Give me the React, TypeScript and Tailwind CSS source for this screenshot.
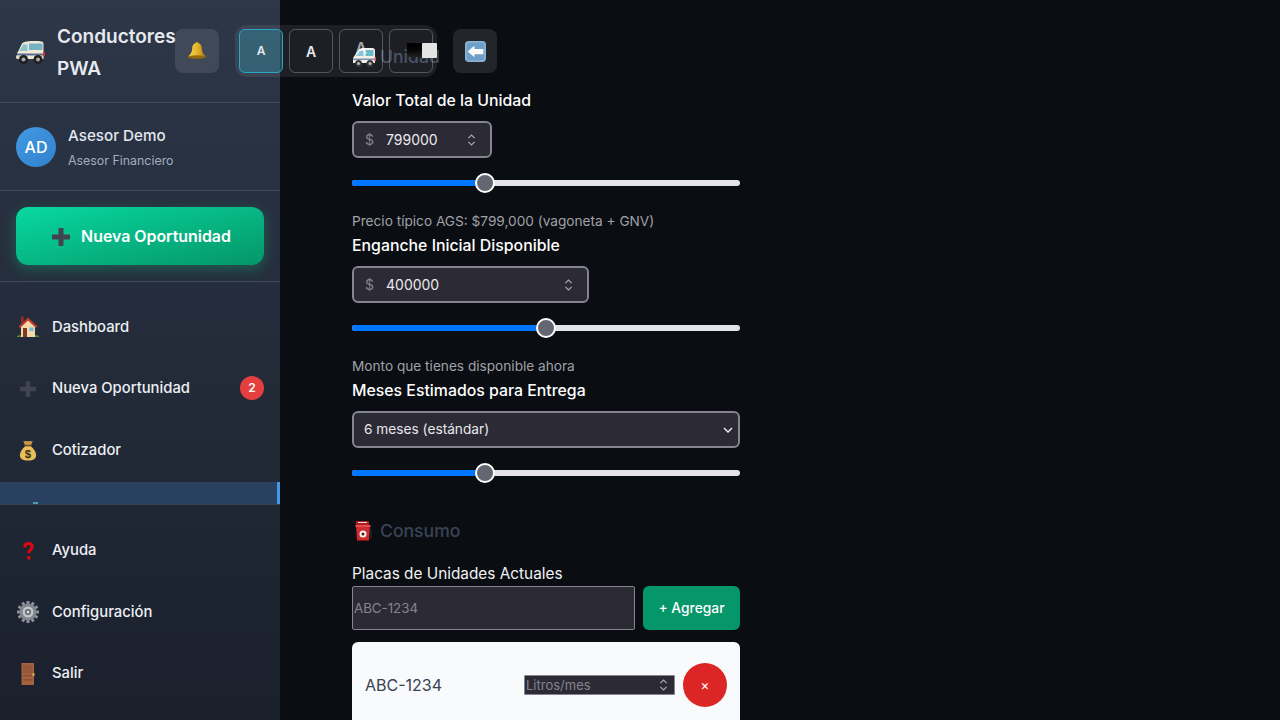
import React from "react";

const font = { fontFamily: "Inter, 'Liberation Sans', sans-serif" };

function VanIcon({ className }: { className?: string }) {
  return (
    <svg viewBox="0 0 29 25" className={className}>
      <path d="M6 3.500C8 1.500 12 1 20 1c3 0 5.500.2 6.500.8.800.5 1 1.200 1 2.200v15H1v-5c0-1 .4-1.800 1.200-2.800z" fill="#efe8d2" />
      <path d="M7 4.500h4.500V11H3.200z" fill="#8cc3cf" />
      <path d="M13 3.500h13.500V10H13z" fill="#74b3c6" />
      <path d="M1 13.500h27v2H1z" fill="#5a6d9a" />
      <rect x="0" y="15.500" width="3" height="3" fill="#d9d4c4" />
      <rect x="27" y="12" width="2" height="4" fill="#c9393a" />
      <circle cx="7.500" cy="19.500" r="4.500" fill="#1f1f1f" />
      <circle cx="7.500" cy="19.500" r="2" fill="#a9a9a9" />
      <circle cx="22" cy="19.500" r="4.500" fill="#1f1f1f" />
      <circle cx="22" cy="19.500" r="2" fill="#a9a9a9" />
    </svg>
  );
}

function AmbulanceIcon({ className }: { className?: string }) {
  return (
    <svg viewBox="0 0 24 22" className={className}>
      <path d="M7 3.500c1-1 2.500-1.500 4-1.500h9.500c1.500 0 2.500 1 2.500 2.500V17H1v-4c0-1 .3-1.700 1-2.500z" fill="#f1efe6" />
      <path d="M8 4.500h3.500V10H3.800z" fill="#7cc4d4" />
      <path d="M13.500 4h8v6h-8z" fill="#5fb6c9" />
      <path d="M1 12.500h22V14H1z" fill="#6d86ad" />
      <rect x="22.500" y="11" width="1.500" height="4" fill="#d8443c" />
      <circle cx="6.500" cy="17.500" r="3.500" fill="#262626" />
      <circle cx="6.500" cy="17.500" r="1.500" fill="#b8b8b8" />
      <circle cx="18" cy="17.500" r="3.500" fill="#262626" />
      <circle cx="18" cy="17.500" r="1.500" fill="#b8b8b8" />
    </svg>
  );
}

function BellIcon() {
  return (
    <svg viewBox="0 0 20 20" className="h-[20px] w-[20px]">
      <defs>
        <linearGradient id="bell" x1="0" y1="0" x2="1" y2="0">
          <stop offset="0" stopColor="#f9da4e" />
          <stop offset="0.6" stopColor="#e0ac25" />
          <stop offset="1" stopColor="#a6770e" />
        </linearGradient>
      </defs>
      <circle cx="10" cy="2.200" r="1.500" fill="#c6951f" />
      <path d="M10 2c3.500 0 4.800 2.500 4.800 5.500 0 3 1 5.200 4 8H1.200c3-2.800 4-5 4-8C5.200 4.500 6.500 2 10 2z" fill="url(#bell)" />
      <ellipse cx="10" cy="16" rx="9" ry="1.700" fill="#94690e" />
    </svg>
  );
}

function BackIcon() {
  return (
    <svg viewBox="0 0 20 20" className="h-[21px] w-[21px]">
      <rect x="0" y="0" width="20" height="20" rx="3.500" fill="#8cb4d4" />
      <rect x="1.500" y="1.500" width="17" height="17" rx="2.500" fill="#6e9fc8" />
      <path d="M2.500 10 9 4.500V7.500h8.500v5H9v3z" fill="#fafafa" />
    </svg>
  );
}

function PlusIcon({ className }: { className?: string }) {
  return (
    <svg viewBox="0 0 18 18" className={className}>
      <path d="M7.500 0h3c.600 0 1 .400 1 1v5.500H17c.600 0 1 .400 1 1v3c0 .600-.400 1-1 1h-5.500V17c0 .600-.400 1-1 1h-3c-.600 0-1-.400-1-1v-5.500H1c-.600 0-1-.400-1-1v-3c0-.600.400-1 1-1h5.500V1c0-.600.400-1 1-1z" fill="#3f4450" />
    </svg>
  );
}

function HouseIcon() {
  return (
    <svg viewBox="0 0 22 22" className="h-[22px] w-[22px]">
      <path d="M0 20.500c1-1.500 3-1.500 4-1h14c1-.500 3-.500 4 1V21H0z" fill="#5b8c3a" />
      <path d="M4 10 11 3.500 18 10v11H4z" fill="#f3d9a8" />
      <rect x="4" y="0.500" width="2.500" height="6" fill="#9c2f25" />
      <path d="M11 1.500 1.500 10.500 3 12l8-7.500 8 7.500 1.500-1.500z" fill="#c0392b" />
      <rect x="6" y="12" width="4" height="9" fill="#7a3b22" />
      <rect x="12.500" y="11.500" width="4" height="3.500" fill="#6db7e4" />
    </svg>
  );
}

function MoneyBagIcon() {
  return (
    <svg viewBox="0 0 18 22" className="h-[21px] w-[18px]">
      <path d="M4 1c2 1 3-.5 5 .5 2-1 3 .5 5-.5l-2 5H6z" fill="#c69a4a" />
      <rect x="5.500" y="5" width="7" height="1.500" fill="#6d4c1f" />
      <path d="M6 6.500h6c3 2.500 5.500 6 5.500 9.500 0 3.500-3 5.500-8.500 5.500S.5 19.500.5 16C.5 12.500 3 9 6 6.500z" fill="#e9bf5a" />
      <text x="9" y="18.500" textAnchor="middle" fontSize="12" fontWeight="700" fill="#3a2e16" fontFamily="'Liberation Sans', sans-serif">$</text>
    </svg>
  );
}

function QuestionIcon() {
  return (
    <svg viewBox="0 0 11 18" className="h-[18px] w-[11px]" fill="none">
      <path d="M1.800 5.500C1.800 2.800 3.500 1.600 5.500 1.600c2.200 0 3.700 1.300 3.700 3.200 0 2.700-3.400 3.200-3.400 6.400" stroke="#e0060f" strokeWidth="3" />
      <circle cx="5.800" cy="15.800" r="1.900" fill="#e0060f" />
    </svg>
  );
}

function GearIcon() {
  const teeth = Array.from({ length: 12 }, (_, i) => i * 30);
  return (
    <svg viewBox="0 0 22 22" className="h-[22px] w-[22px]">
      {teeth.map((a) => (
        <rect key={a} x="9.500" y="0" width="3" height="5" fill="#8d939b" transform={`rotate(${a} 11 11)`} />
      ))}
      <circle cx="11" cy="11" r="8.500" fill="#7f858d" />
      <circle cx="11" cy="11" r="5.500" fill="#c2c6cb" />
      <circle cx="11" cy="11" r="3" fill="#5c6168" />
      <circle cx="11" cy="11" r="1.500" fill="#d9dce0" />
    </svg>
  );
}

function DoorIcon() {
  return (
    <svg viewBox="0 0 14 22" className="h-[22px] w-[14px]">
      <rect x="0.500" y="0" width="12.500" height="22" fill="#a5623f" />
      <rect x="2" y="1.500" width="9.500" height="9" fill="#96583a" />
      <rect x="2" y="12" width="9.500" height="1.500" fill="#8a4f31" />
      <rect x="2" y="16" width="9.500" height="1.500" fill="#8a4f31" />
      <rect x="11.500" y="10" width="2" height="3" fill="#d5b041" />
    </svg>
  );
}

function FuelIcon() {
  return (
    <svg viewBox="0 0 18 20" className="h-[20px] w-[18px]">
      <path d="M1 0h13v4H1z" fill="#a91f24" />
      <path d="M3 1h9v1H3z" fill="#e8d5d5" />
      <path d="M1 4h14l-1 15H2z" fill="#cf2a2e" />
      <path d="M0.500 4h15v2h-15z" fill="#e84a4c" />
      <circle cx="8" cy="13" r="3.500" fill="#f4f4f4" />
      <circle cx="8" cy="13" r="1.500" fill="#5a1212" />
      <path d="M15 8h2v10h-2z" fill="#1c1c20" />
      <path d="M2 19h12v1H2z" fill="#7a1518" />
    </svg>
  );
}

function Stepper({ className }: { className?: string }) {
  return (
    <svg viewBox="0 0 10 14" className={className} fill="none" stroke="currentColor" strokeWidth="1.300">
      <path d="M1.500 5 5 1.500 8.500 5" />
      <path d="M1.500 9 5 12.500 8.500 9" />
    </svg>
  );
}

function Slider({ pct }: { pct: number }) {
  return (
    <div className="relative mt-[15px] h-[20px] w-[388px]">
      <div className="absolute left-0 right-0 top-[7px] h-[6px] rounded-full bg-[#e4e3ea]" />
      <div className="absolute left-0 top-[7px] h-[6px] rounded-l-full bg-[#0075ff]" style={{ width: `${pct}%` }} />
      <div
        className="absolute top-0 h-[20px] w-[20px] -translate-x-1/2 rounded-full border-2 border-white bg-[#666673]"
        style={{ left: `${pct}%` }}
      />
    </div>
  );
}

function MoneyInput({ value, width }: { value: string; width: string }) {
  return (
    <div className={`mt-[10px] flex h-[37px] items-center rounded-md border-2 border-[#85848f] bg-[#2c2b35] pl-[11px] pr-[14px] text-[14px] ${width}`}>
      <span className="w-[21px] text-[#85848f]">$</span>
      <span className="flex-1 text-[#e8e8ec]">{value}</span>
      <Stepper className="h-[14px] w-[9px] text-[#a9a9b2]" />
    </div>
  );
}

function Label({ children }: { children: React.ReactNode }) {
  return <div className="h-[22px] text-[15.850px] font-medium leading-[24px] text-white">{children}</div>;
}

function Help({ children }: { children: React.ReactNode }) {
  return <div className="mt-[19px] h-[18px] text-[13.650px] leading-[18px] text-[#a1a1a8]">{children}</div>;
}

function NavItem({ icon, label, badge }: { icon: React.ReactNode; label: string; badge?: string }) {
  return (
    <div className="mb-[2.500px] flex h-[59px] items-center px-[16px]">
      <span className="flex w-[24px] justify-center">{icon}</span>
      <span className="ml-[12px] flex-1 text-[14.800px] font-medium text-[#edf0f4]">{label}</span>
      {badge && (
        <span className="-mt-[1px] flex h-[24px] w-[24px] items-center justify-center rounded-full bg-[#e53e3e] text-[12px] font-semibold text-white">
          {badge}
        </span>
      )}
    </div>
  );
}

export default function App() {
  return (
    <div style={font} className="relative flex h-[720px] w-[1280px] overflow-hidden bg-[#0a0d12]">
      {/* Sidebar */}
      <aside className="flex h-[720px] w-[280px] shrink-0 flex-col overflow-hidden bg-gradient-to-b from-[#2d3748] to-[#1a202c]">
        <div className="flex h-[103px] shrink-0 items-center border-b border-[#414a5a] pl-[16px] pt-[3px]">
          <VanIcon className="h-[25px] w-[29px]" />
          <div className="ml-[12px] text-[19px] font-semibold leading-[32px] text-[#e6e9ee]">
            Conductores
            <br />
            PWA
          </div>
        </div>
        <div className="flex h-[88px] shrink-0 items-center border-b border-[#414a5a] pl-[16px]">
          <div className="flex h-[40px] w-[40px] items-center justify-center rounded-full bg-gradient-to-br from-[#4299e1] to-[#3182ce] text-[16px] font-medium text-white">
            AD
          </div>
          <div className="ml-[12px] pt-[2px]">
            <div className="text-[15.200px] font-medium leading-[22px] text-[#e2e8f0]">Asesor Demo</div>
            <div className="mt-[5px] text-[12.400px] leading-[18px] text-[#a0aec0]">Asesor Financiero</div>
          </div>
        </div>
        <div className="shrink-0 border-b border-[#414a5a] p-[16px]">
          <div className="flex h-[58px] items-center justify-center rounded-xl bg-gradient-to-br from-[#08d9a0] to-[#059669] pl-[3px] pt-[1px] text-[15.900px] font-semibold text-white shadow-[0_4px_14px_rgba(16,185,129,0.35)]">
            <PlusIcon className="h-[18px] w-[18px]" />
            <span className="ml-[11px]">Nueva Oportunidad</span>
          </div>
        </div>
        <nav className="h-[222px] shrink-0 overflow-hidden pt-[15.500px]">
          <NavItem icon={<HouseIcon />} label="Dashboard" />
          <NavItem icon={<PlusIcon className="h-[16px] w-[16px]" />} label="Nueva Oportunidad" badge="2" />
          <NavItem icon={<MoneyBagIcon />} label="Cotizador" />
          <div className="h-[59px] border-r-[3px] border-[#4299e1] bg-[#2a4060] pl-[33px] pt-[20px]">
            <div className="h-[2px] w-[5px] bg-[#4a9bb0]" />
          </div>
        </nav>
        <div className="flex-1 border-t border-[#3a4353] pt-[16px]">
          <NavItem icon={<QuestionIcon />} label="Ayuda" />
          <NavItem icon={<GearIcon />} label="Configuración" />
          <NavItem icon={<DoorIcon />} label="Salir" />
        </div>
      </aside>

      {/* Main column */}
      <main className="ml-[72px] w-[388px] shrink-0">
        <div className="flex h-[89px] items-center pt-[25px] text-[17.600px] font-medium text-[#3a4458]">
          <AmbulanceIcon className="h-[22px] w-[24px]" />
          <span className="ml-[4px]">Unidad</span>
        </div>
        <Label>Valor Total de la Unidad</Label>
        <MoneyInput value="799000" width="w-[140px]" />
        <Slider pct={34.3} />
        <Help>Precio típico AGS: $799,000 (vagoneta + GNV)</Help>
        <div className="mt-[4px]">
          <Label>Enganche Inicial Disponible</Label>
        </div>
        <MoneyInput value="400000" width="w-[237px]" />
        <Slider pct={50} />
        <Help>Monto que tienes disponible ahora</Help>
        <div className="mt-[4px]">
          <Label>Meses Estimados para Entrega</Label>
        </div>
        <div className="mt-[10px] flex h-[37px] w-[388px] items-center justify-between rounded-md border-2 border-[#85848f] bg-[#2c2b35] pl-[10px] pr-[5px] text-[13.700px] text-[#e8e8ec]">
          <span>6 meses (estándar)</span>
          <svg viewBox="0 0 10 6" className="h-[6px] w-[10px]" fill="none" stroke="#e8e8ec" strokeWidth="1.500">
            <path d="M1 1l4 4 4-4" />
          </svg>
        </div>
        <Slider pct={34.3} />
        <div className="mt-[36px] flex h-[24px] items-center pl-[3px] text-[17.600px] font-medium text-[#3a4458]">
          <FuelIcon />
          <span className="ml-[7px]">Consumo</span>
        </div>
        <div className="mt-[19px] h-[22px] text-[15.350px] leading-[24px] text-[#f2f2f4]">Placas de Unidades Actuales</div>
        <div className="mt-[2px] flex gap-[8px]">
          <div className="flex h-[44px] w-[283px] items-center rounded-[2px] border border-[#85848f] bg-[#2c2b35] pl-[1px] pt-[1px] text-[13.300px] text-[#85848f]">
            ABC-1234
          </div>
          <div className="flex h-[44px] w-[97px] items-center justify-center rounded-md bg-[#059669] text-[13.800px] font-medium text-white">
            + Agregar
          </div>
        </div>
        <div className="mt-[12px] flex h-[86px] items-start rounded-t-md bg-[#f9fafb] px-[13px] pt-[21px]">
          <span className="flex h-[44px] items-center text-[16px] text-[#374151]">ABC-1234</span>
          <div className="ml-auto mt-[12px] flex h-[20px] w-[151px] items-center justify-between rounded-[1px] border border-[#85848f] bg-[#2c2b35] pl-[1px] pr-[6px] text-[13px] text-[#85848f]">
            <span className="pt-[1px]">Litros/mes</span>
            <Stepper className="h-[14px] w-[9px] text-[#a9a9b2]" />
          </div>
          <div className="ml-[8px] flex h-[44px] w-[44px] items-center justify-center rounded-full bg-[#dc2626] text-[13.500px] text-white">×</div>
        </div>
      </main>

      {/* Floating toolbar */}
      <div className="absolute left-[175px] top-[29px] flex h-[44px] w-[44px] items-center justify-center rounded-lg bg-[#ffffff1a]">
        <BellIcon />
      </div>
      <div className="absolute left-[235px] top-[25px] flex gap-[6px] rounded-xl bg-[#ffffff14] p-[4px]">
        <div className="flex h-[44px] w-[44px] items-center justify-center rounded-md border border-[#2aa7c4] bg-[#2aa7c44d] text-[12px] font-semibold text-[#e8e8ec]">A</div>
        <div className="flex h-[44px] w-[44px] items-center justify-center rounded-md border border-[#ffffff40] text-[14px] font-semibold text-[#e8e8ec]">A</div>
        <div className="flex h-[44px] w-[44px] items-start justify-center rounded-md border border-[#ffffff40] pt-[8px] text-[16px] font-semibold leading-[20px] text-[#ffffff99]">A</div>
        <div className="relative h-[44px] w-[44px] rounded-md border border-[#ffffff40]">
          <span className="absolute left-[17px] top-[13px] h-[14px] w-[15px] bg-gradient-to-b from-[#000] to-[#222]" />
          <span className="absolute left-[32px] top-[13px] h-[15px] w-[15px] rounded-[1px] bg-[#e3e3e3]" />
        </div>
      </div>
      <div className="absolute left-[453px] top-[29px] flex h-[44px] w-[44px] items-center justify-center rounded-lg bg-[#ffffff1a]">
        <BackIcon />
      </div>
    </div>
  );
}
